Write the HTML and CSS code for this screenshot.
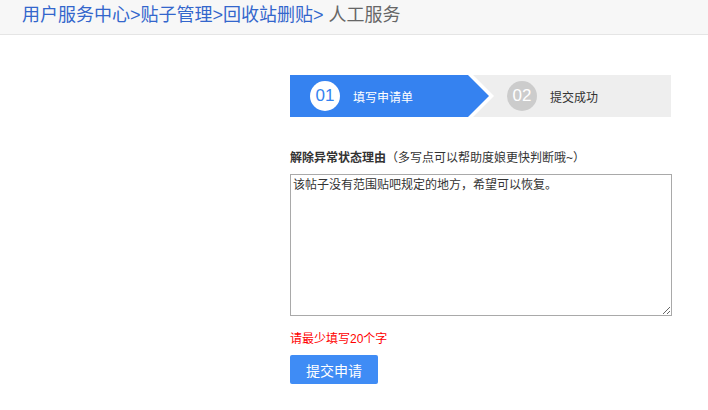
FILE: index.html
```html
<!DOCTYPE html>
<html lang="zh-CN">
<head>
    <meta charset="UTF-8">
    <title>人工服务</title>
    <link rel="stylesheet" href="styles.css">
</head>
<body>
    <div class="crumbs">
        <a href="#">用户服务中心</a>&gt;<a href="#">贴子管理</a>&gt;<a href="#">回收站删贴</a>&gt; <span class="current">人工服务</span>
    </div>

    <div class="main">
        <!-- 步骤条 -->
        <div class="steps">
            <div class="step step-active">
                <span class="step-num">01</span>
                <span class="step-text">填写申请单</span>
            </div>
            <div class="step step-next">
                <span class="step-num">02</span>
                <span class="step-text">提交成功</span>
            </div>
        </div>

        <!-- 申请表单 -->
        <div class="form">
            <div class="form-label"><b>解除异常状态理由</b>（多写点可以帮助度娘更快判断哦~）</div>
            <textarea class="reason">该帖子没有范围贴吧规定的地方，希望可以恢复。</textarea>
            <p class="tip">请最少填写20个字</p>
            <button class="submit">提交申请</button>
        </div>
    </div>
</body>
</html>
```

FILE: styles.css
```css
body {
    margin: 0;
    padding: 0;
    font-family: "Liberation Sans", "Noto Sans CJK SC", sans-serif;
    color: #333;
    background: #fff;
}
/* 面包屑 */
.crumbs {
    height: 34px;
    line-height: 30px;
    padding-left: 22px;
    font-size: 18px;
    background-color: #f7f7f7;
    border-bottom: 1px solid #e5e5e5;
    color: #3366cc;
}
.crumbs a {
    color: #3366cc;
    text-decoration: none;
}
.crumbs .current {
    color: #666;
}
.main {
    margin-left: 290px;
    padding-top: 40px;
}
/* 步骤条 */
.steps {
    display: flex;
    width: 381px;
    height: 42px;
    background-color: #eeeeee;
    overflow: hidden;
}
.step {
    display: flex;
    align-items: center;
    height: 42px;
}
.step-active {
    position: relative;
    width: 158px;
    padding-left: 20px;
    background-color: #3582f0;
    color: #fff;
}
.step-active::before,
.step-active::after {
    content: "";
    position: absolute;
    width: 0;
    height: 0;
}
.step-active::before {
    left: 178px;
    top: -5px;
    border-left: 26px solid #fff;
    border-top: 26px solid transparent;
    border-bottom: 26px solid transparent;
}
.step-active::after {
    left: 178px;
    top: 0;
    border-left: 21px solid #3582f0;
    border-top: 21px solid transparent;
    border-bottom: 21px solid transparent;
}
.step-next {
    padding-left: 39px;
    color: #333;
}
.step-num {
    width: 30px;
    height: 30px;
    line-height: 30px;
    border-radius: 50%;
    text-align: center;
    font-size: 17px;
    margin-right: 13px;
}
.step-active .step-num {
    background-color: #fff;
    color: #3582f0;
}
.step-next .step-num {
    background-color: #cccccc;
    color: #fff;
}
.step-text {
    font-size: 12px;
}
/* 表单 */
.form {
    padding-top: 33px;
}
.form-label {
    font-size: 12px;
    line-height: 16px;
    margin-bottom: 8px;
}
.reason {
    display: block;
    box-sizing: border-box;
    width: 382px;
    height: 142px;
    margin: 0;
    padding: 2px;
    border: 1px solid #a9a9a9;
    font-family: "Liberation Sans", "Noto Sans CJK SC", sans-serif;
    font-size: 12px;
    line-height: 16px;
    color: #333;
}
.tip {
    margin: 15px 0 8px;
    font-size: 12px;
    line-height: 16px;
    color: #ff0000;
}
.submit {
    width: 88px;
    height: 29px;
    padding: 0;
    border: none;
    border-radius: 2px;
    background-color: #3f8cf5;
    color: #fff;
    font-family: "Liberation Sans", "Noto Sans CJK SC", sans-serif;
    font-size: 14px;
}
```
